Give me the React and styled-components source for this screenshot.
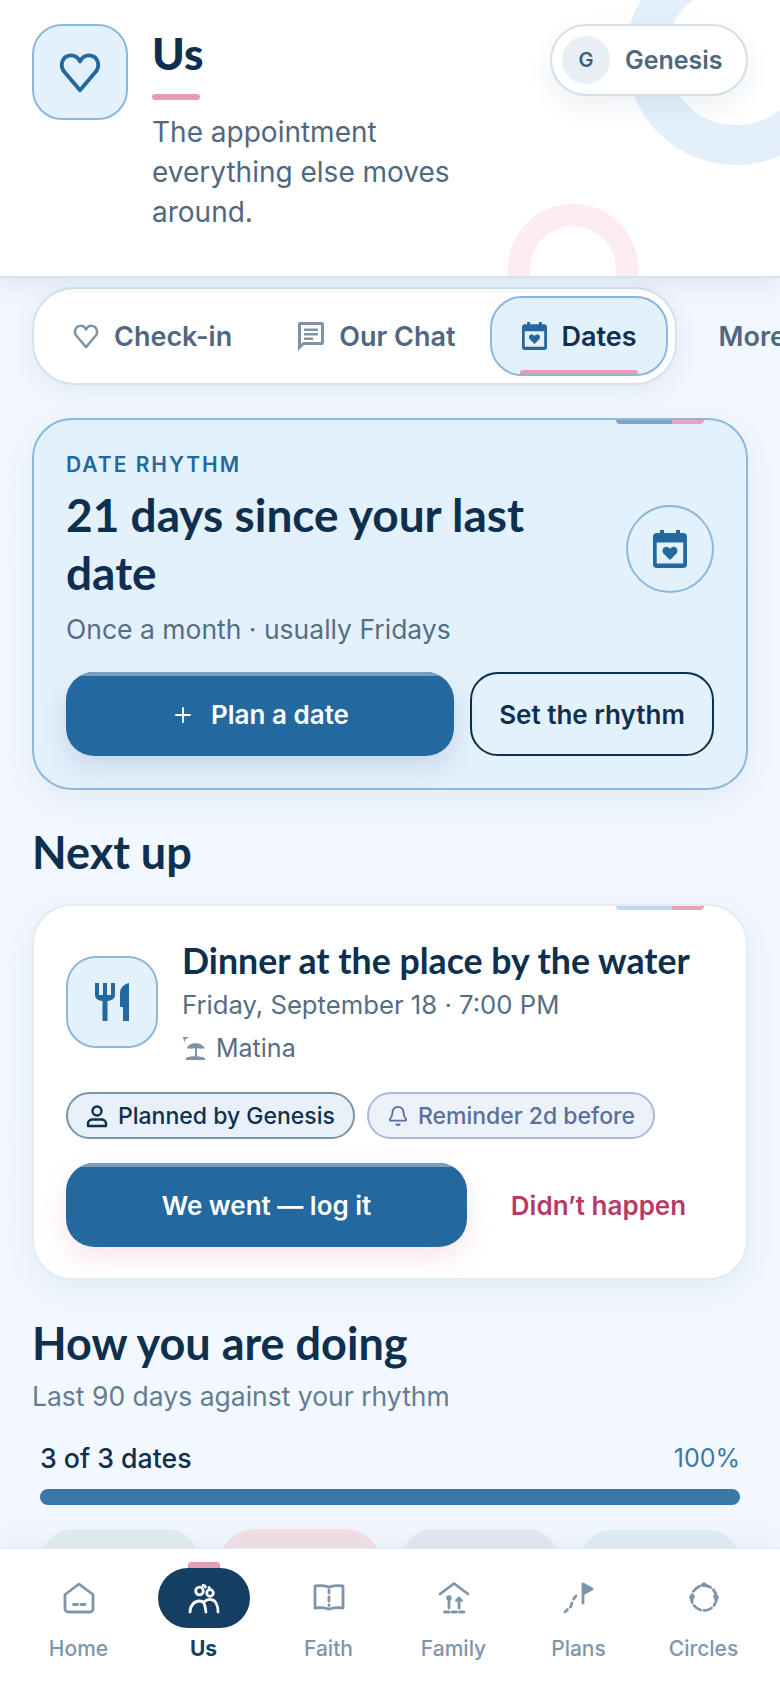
import React from 'react';
import styled, { createGlobalStyle } from 'styled-components';
import { Bell, Plus } from 'lucide-react';

const GlobalStyle = createGlobalStyle`
  html, body {
    margin: 0;
    padding: 0;
    background: #f2f8fe;
    font-family: Inter, "Liberation Sans", sans-serif;
  }
  * { box-sizing: border-box; }
`;

const headingFont = `Lato, Inter, sans-serif`;

const Screen = styled.div`
  width: 780px;
  height: 1688px;
  display: flex;
  flex-direction: column;
  overflow: hidden;
  background: linear-gradient(180deg, #f1f7fe 0%, #f3f8fe 100%);
`;

const Header = styled.header`
  position: relative;
  z-index: 2;
  flex-shrink: 0;
  height: 278px;
  padding: 24px 32px 0;
  display: flex;
  gap: 24px;
  align-items: flex-start;
  overflow: hidden;
  background: #fff;
  border-bottom: 2px solid #d8e4ed;
  box-shadow: 0 6px 22px rgba(30, 70, 110, 0.1);
`;

const Ring = styled.div`
  position: absolute;
  left: ${p => p.$left}px;
  top: ${p => p.$top}px;
  width: ${p => p.$size}px;
  height: ${p => p.$size}px;
  border-radius: 50%;
  border: ${p => p.$stroke}px solid ${p => p.$color};
`;

const IconTile = styled.div`
  position: relative;
  width: ${p => p.$size || 96}px;
  height: ${p => p.$size || 96}px;
  border-radius: 30px;
  flex-shrink: 0;
  display: flex;
  align-items: center;
  justify-content: center;
  background: #e3f1fc;
  border: 2px solid #8db8dc;
  color: #23689f;
`;

const HeaderText = styled.div`
  position: relative;
  width: 330px;
`;

const PageTitle = styled.h1`
  margin: 0;
  font-family: ${headingFont};
  font-size: 44px;
  font-weight: 900;
  line-height: 58px;
  color: #0f2f4f;
`;

const TitleUnderline = styled.div`
  width: 48px;
  height: 6px;
  margin-top: 12px;
  border-radius: 3px;
  background: #e79bb6;
`;

const Subtitle = styled.p`
  margin: 12px 0 0;
  font-size: 28px;
  line-height: 40px;
  color: #4f6880;
`;

const ProfilePill = styled.div`
  position: relative;
  margin-left: auto;
  width: 198px;
  height: 72px;
  padding-left: 10px;
  display: flex;
  align-items: center;
  gap: 15px;
  border-radius: 36px;
  background: #fff;
  border: 2px solid #d3e0ea;
  box-shadow: 0 10px 26px rgba(30, 70, 110, 0.08);
`;

const Avatar = styled.div`
  width: 48px;
  height: 48px;
  border-radius: 50%;
  display: flex;
  align-items: center;
  justify-content: center;
  font-size: 20px;
  font-weight: 600;
  color: #3f5b76;
  background: #e9eef4;
`;

const ProfileName = styled.span`
  font-size: 25px;
  font-weight: 600;
  color: #4f6880;
`;

const Body = styled.main`
  flex: 1;
  min-height: 0;
  overflow: hidden;
  padding: 9px 32px 0;
`;

const TabRow = styled.div`
  display: flex;
  align-items: center;
  gap: 42px;
  white-space: nowrap;
`;

const TabTrack = styled.div`
  flex-shrink: 0;
  display: flex;
  gap: 2px;
  height: 98px;
  padding: 7px 7px 7px 6px;
  border-radius: 42px;
  background: #fff;
  border: 2px solid #d5e2ec;
  box-shadow: 0 6px 24px rgba(30, 70, 110, 0.08);
`;

const Tab = styled.div`
  position: relative;
  height: 80px;
  margin-left: ${p => (p.$active ? 2 : 0)}px;
  padding: 0 29px 0 30px;
  display: flex;
  align-items: center;
  gap: 14px;
  border-radius: 32px;
  overflow: hidden;
  font-size: 27px;
  font-weight: 600;
  color: ${p => (p.$active ? '#0f2f4f' : '#4f6880')};
  background: ${p => (p.$active ? '#e3f1fc' : 'transparent')};
  border: 2px solid ${p => (p.$active ? '#8db8dc' : 'transparent')};
  svg { color: ${p => (p.$active ? '#23689f' : '#7d93a8')}; }
`;

const TabMarker = styled.span`
  position: absolute;
  left: 28px;
  right: 28px;
  bottom: -2px;
  height: 6px;
  border-radius: 3px 3px 0 0;
  background: #e79bb6;
`;

const MoreTab = styled.span`
  font-size: 27px;
  font-weight: 600;
  color: #4f6880;
`;

const Card = styled.section`
  position: relative;
  border-radius: 40px;
  overflow: hidden;
  border: 2px solid ${p => (p.$hero ? '#8db8dc' : '#e4ebf1')};
  background: ${p => (p.$hero ? '#e3f1fc' : '#fff')};
  box-shadow: 0 10px 30px rgba(35, 90, 140, 0.08);
`;

const HeroCard = styled(Card)`
  margin-top: 33px;
  padding: 32px 32px 32px;
`;

const NextCard = styled(Card)`
  margin-top: 23px;
  padding: 32px 32px 31px;
`;

const CornerStrip = styled.div`
  position: absolute;
  top: -2px;
  right: 42px;
  display: flex;
  height: 6px;
  border-radius: 0 0 4px 4px;
  overflow: hidden;
`;

const StripPart = styled.span`
  width: ${p => p.$width}px;
  background: ${p => p.$color};
`;

const HeroTop = styled.div`
  display: flex;
  align-items: center;
  gap: 24px;
`;

const HeroText = styled.div`
  flex: 1;
`;

const Eyebrow = styled.div`
  font-size: 21px;
  line-height: 26px;
  font-weight: 600;
  letter-spacing: 2px;
  color: #23689f;
`;

const HeroTitle = styled.h2`
  margin: 8px 0 0;
  font-family: ${headingFont};
  font-size: 46px;
  line-height: 58px;
  font-weight: 700;
  color: #0f2f4f;
`;

const HeroSub = styled.p`
  margin: 10px 0 0;
  font-size: 26.500px;
  line-height: 34px;
  color: #566e84;
`;

const CircleIcon = styled.div`
  flex-shrink: 0;
  width: 88px;
  height: 88px;
  border-radius: 50%;
  display: flex;
  align-items: center;
  justify-content: center;
  border: 2px solid #8db8dc;
  color: #23689f;
`;

const ButtonRow = styled.div`
  display: flex;
  align-items: center;
  gap: 16px;
  margin-top: ${p => p.$top}px;
`;

const PrimaryButton = styled.button`
  position: relative;
  flex: 0 0 ${p => p.$width}px;
  height: 84px;
  padding: 1px 0 0;
  display: flex;
  align-items: center;
  justify-content: center;
  gap: 16px;
  overflow: hidden;
  border: 0;
  border-radius: 28px;
  font: 600 26px Inter, sans-serif;
  color: #fff;
  background: #23689f;
  box-shadow: 0 12px 24px ${p => p.$glow};
  &::before {
    content: '';
    position: absolute;
    top: 0;
    left: 0;
    right: 0;
    height: 4px;
    background: #7a9dbd;
  }
`;

const OutlineButton = styled.button`
  flex: 1;
  height: 84px;
  border-radius: 28px;
  border: 2px solid #0f2f4f;
  background: transparent;
  font: 600 26px Inter, sans-serif;
  color: #0f2f4f;
`;

const TextButton = styled.button`
  flex: 1;
  height: 84px;
  border: 0;
  background: none;
  font: 600 26px Inter, sans-serif;
  color: #b73a68;
`;

const SectionTitle = styled.h2`
  margin: ${p => p.$top}px 0 0;
  font-family: ${headingFont};
  font-size: 45px;
  line-height: 54px;
  padding-bottom: 2px;
  font-weight: 700;
  color: #0f2f4f;
`;

const EventRow = styled.div`
  display: flex;
  align-items: center;
  gap: 24px;
`;

const EventTitle = styled.div`
  font-family: ${headingFont};
  font-size: 35.700px;
  line-height: 46px;
  padding-bottom: 3px;
  font-weight: 700;
  white-space: nowrap;
  color: #0f2f4f;
`;

const EventDate = styled.div`
  font-size: 25.700px;
  line-height: 36px;
  color: #566e84;
`;

const EventPlace = styled.div`
  margin-top: 7px;
  display: flex;
  align-items: center;
  gap: 10px;
  font-size: 25px;
  line-height: 36px;
  color: #566e84;
  svg { color: #7d93a8; }
`;

const ChipRow = styled.div`
  display: flex;
  gap: 12px;
  margin-top: 26px;
`;

const Chip = styled.div`
  height: 47px;
  padding: 0 18px;
  display: flex;
  align-items: center;
  gap: ${p => (p.$muted ? 9 : 10)}px;
  border-radius: 24px;
  font-size: 23px;
  font-weight: 500;
  white-space: nowrap;
  color: ${p => (p.$muted ? '#5a6f9a' : '#0f2f4f')};
  background: ${p => (p.$muted ? '#edf1fa' : '#e8f1f9')};
  border: 2px solid ${p => (p.$muted ? '#aeb9d6' : '#7d93a8')};
`;

const SectionSub = styled.p`
  margin: 6px 0 0;
  font-size: 26.500px;
  line-height: 36px;
  color: #647c92;
`;

const RateRow = styled.div`
  margin: 26px 8px 0;
  display: flex;
  justify-content: space-between;
  line-height: 36px;
  font-size: 26.700px;
  font-weight: 500;
  color: #0f2f4f;
`;

const RatePercent = styled.span`
  font-weight: 400;
  font-size: 25px;
  color: #3a78a5;
`;

const RateBar = styled.div`
  margin: 13px 8px 0;
  height: 16px;
  border-radius: 8px;
  background: #3a78a5;
`;

const StatGrid = styled.div`
  margin: 24px 8px 0;
  display: grid;
  grid-template-columns: repeat(4, 1fr);
  gap: 20px;
`;

const StatTile = styled.div`
  height: 100px;
  border-radius: 34px;
  background: ${p => p.$color};
`;

const BottomNav = styled.nav`
  position: relative;
  z-index: 2;
  flex-shrink: 0;
  height: 139px;
  padding: 0 16px;
  display: grid;
  grid-template-columns: repeat(6, 125px);
  background: #fff;
  box-shadow: 0 -1px 0 #e3eaf0, 0 -10px 30px rgba(30, 70, 110, 0.06);
`;

const NavItem = styled.div`
  position: relative;
  display: flex;
  flex-direction: column;
  align-items: center;
  padding-top: 19px;
  font-size: 21px;
  line-height: 26px;
  font-weight: ${p => (p.$active ? 700 : 500)};
  color: ${p => (p.$active ? '#143f63' : '#7e95ab')};
`;

const NavIcon = styled.div`
  width: 92px;
  height: 60px;
  margin-bottom: 8px;
  display: flex;
  align-items: center;
  justify-content: center;
  border-radius: 30px;
  color: ${p => (p.$active ? '#fff' : '#7e95ab')};
  background: ${p => (p.$active ? '#143f63' : 'transparent')};
`;

const NavMarker = styled.span`
  position: absolute;
  top: 13px;
  left: 50%;
  width: 32px;
  height: 6px;
  margin-left: -16px;
  border-radius: 3px 3px 0 0;
  background: #e79bb6;
`;

const Heart = ({ size, width = 2.4 }) => (
  <svg width={size} height={size} viewBox="0 0 24 24" fill="none" stroke="currentColor" strokeWidth={width} strokeLinejoin="round">
    <path d="M12 21.500 3.600 11.600C1.400 8.800 2.600 3.600 7 3.300c2.300-.1 4 1.200 5 3.200 1-2 2.700-3.300 5-3.200 4.400.3 5.600 5.500 3.400 8.300z" />
  </svg>
);

const ChatIcon = () => (
  <svg width="28" height="30" viewBox="0 0 28 30" fill="currentColor">
    <path fillRule="evenodd" d="M3 1h22a2 2 0 0 1 2 2v19a2 2 0 0 1-2 2H7l-6 6V3a2 2 0 0 1 2-2zm1 3v19l2-2h18V4z" />
    <path d="M7 7.500h14v2.500H7zM7 12h14v2.500H7zM7 16.500h9V19H7z" />
  </svg>
);

const CalendarHeart = ({ width, height }) => (
  <svg width={width} height={height} viewBox="0 0 34 38" fill="currentColor">
    <path fillRule="evenodd" d="M7 0h4v3h12V0h4v3h3a4 4 0 0 1 4 4v27a4 4 0 0 1-4 4H4a4 4 0 0 1-4-4V7a4 4 0 0 1 4-4h3zM3.700 12.500v21h26.500v-21z" />
    <path d="M17 30 10.500 23.500c-2.500-3 0-7 3.200-6.700 1.500.1 2.600 1 3.300 2.200.7-1.200 1.800-2.100 3.300-2.200 3.200-.3 5.700 3.700 3.200 6.700z" />
  </svg>
);

const Cutlery = () => (
  <svg width="34" height="38" viewBox="0 0 34 38" fill="currentColor">
    <path d="M0 0h4v12h4V0h4v12h4V0h4v12c0 3-2.500 5.500-7.500 6V38h-5V18C2.500 17.500 0 15 0 12z" />
    <path d="M34 0v38h-6V24h-3V10C25 5 29 1 34 0z" />
  </svg>
);

const BeachIcon = () => (
  <svg width="24" height="24" viewBox="0 0 24 24" fill="currentColor">
    <path d="M1 1h6L3 3.500 2.500 7z" />
    <path d="M5 13c.5-7 15-8 18 0-2-1-3-1-4.500 0-1.500-1-3-1-4.500 0-1.500-1-3-1-4.500 0-1.500-1-3-1-4.500 0z" />
    <path d="M13 12h2v8h-2z" />
    <path d="M4 24v-2c3-2.500 14-2.500 19 0v2z" />
  </svg>
);

const PersonIcon = () => (
  <svg width="22" height="24" viewBox="0 0 22 24" fill="none" stroke="currentColor" strokeWidth="2.400" strokeLinejoin="round">
    <circle cx="11" cy="7" r="4.500" />
    <path d="M2 22v-2.500c0-2.500 2-4 4.500-4h9c2.500 0 4.500 1.500 4.500 4V22z" />
  </svg>
);

const NavSvg = ({ children }) => (
  <svg width="36" height="36" viewBox="0 0 36 36" fill="none" stroke="currentColor" strokeWidth="2.800" strokeLinecap="round" strokeLinejoin="round">
    {children}
  </svg>
);

const HomeIcon = () => (
  <NavSvg>
    <path d="M18 4 32 14.500V29a3 3 0 0 1-3 3H7a3 3 0 0 1-3-3V14.500z" />
    <path d="M12.500 24.500H16.500M20 24.500H24" />
  </NavSvg>
);

const CoupleIcon = () => (
  <NavSvg>
    <circle cx="13.500" cy="11" r="3.800" />
    <circle cx="24" cy="13" r="3.300" />
    <path d="M17 5.500c1 0 2 .5 2.500 1.500M23 7.500l.5 1.500" />
    <path d="M4 32c0-6 4-11 9.500-11S19 26 20 32M18 22c2-2 4-3 7-2.500 4 .5 7 5 7 12.500" />
  </NavSvg>
);

const BookIcon = () => (
  <NavSvg>
    <path d="M4 6c4-.5 9-.5 12 .5 1 .5 3 .5 4 0C23 5.500 28 5.500 32 6v22c-4-.5-8-.5-12 .5-1 .5-3 .5-4 0-4-1-8-1-12-.5z" />
    <path d="M18 10v3M18 17v4M18 25v.5" />
  </NavSvg>
);

const FamilyIcon = () => (
  <NavSvg>
    <path d="M4 14 18 3.500 32 14" />
    <path d="M13 19v9M23 19v9" />
    <circle cx="13" cy="18" r="1.400" />
    <path d="M20.500 20.500 23 18l2.500 2.500" />
    <path d="M8.500 32H13M16 32h4.500M23.500 32H28" />
  </NavSvg>
);

const TrailIcon = () => (
  <NavSvg>
    <path d="M22 23V4l9 5-9 5" fill="currentColor" />
    <path d="M4 32l2.500-2.500M9.500 27l1.500-4M12.500 19l2.500-3" />
  </NavSvg>
);

const CirclesIcon = () => (
  <NavSvg>
    <circle cx="18" cy="18" r="12.500" strokeDasharray="8 3.500" />
    <path d="M16 5 18 3.500 20 5z" fill="currentColor" />
    <path d="M6 20l-1.500-3 3-1zM30 20l1.500-3-3-1z" fill="currentColor" />
  </NavSvg>
);

const tabs = [
  { label: 'Check-in', icon: <Heart size={28} width={2.1} /> },
  { label: 'Our Chat', icon: <ChatIcon /> },
  { label: 'Dates', icon: <CalendarHeart width={25} height={28} />, active: true },
];

const navItems = [
  { label: 'Home', icon: <HomeIcon /> },
  { label: 'Us', icon: <CoupleIcon />, active: true },
  { label: 'Faith', icon: <BookIcon /> },
  { label: 'Family', icon: <FamilyIcon /> },
  { label: 'Plans', icon: <TrailIcon /> },
  { label: 'Circles', icon: <CirclesIcon /> },
];

const statColors = ['#e3eef2', '#f5e2ea', '#e6ebf3', '#e3eff5'];

export default function App() {
  return (
    <Screen>
      <GlobalStyle />
      <Header>
        <Ring $left={626} $top={-55} $size={220} $stroke={40} $color="#e3f0fb" />
        <Ring $left={508} $top={204} $size={130} $stroke={22} $color="#fcebf0" />
        <IconTile>
          <Heart size={46} width={2} />
        </IconTile>
        <HeaderText>
          <PageTitle>Us</PageTitle>
          <TitleUnderline />
          <Subtitle>The appointment everything else moves around.</Subtitle>
        </HeaderText>
        <ProfilePill>
          <Avatar>G</Avatar>
          <ProfileName>Genesis</ProfileName>
        </ProfilePill>
      </Header>

      <Body>
        <TabRow>
          <TabTrack>
            {tabs.map(tab => (
              <Tab key={tab.label} $active={tab.active}>
                {tab.icon}
                {tab.label}
                {tab.active && <TabMarker />}
              </Tab>
            ))}
          </TabTrack>
          <MoreTab>More</MoreTab>
        </TabRow>

        <HeroCard $hero>
          <CornerStrip>
            <StripPart $width={56} $color="#7ea5c8" />
            <StripPart $width={32} $color="#e6a3bc" />
          </CornerStrip>
          <HeroTop>
            <HeroText>
              <Eyebrow>DATE RHYTHM</Eyebrow>
              <HeroTitle>21 days since your last date</HeroTitle>
              <HeroSub>Once a month · usually Fridays</HeroSub>
            </HeroText>
            <CircleIcon>
              <CalendarHeart width={34} height={38} />
            </CircleIcon>
          </HeroTop>
          <ButtonRow $top={26}>
            <PrimaryButton $width={388} $glow="rgba(60, 70, 130, 0.14)">
              <Plus size={24} strokeWidth={2} />
              Plan a date
            </PrimaryButton>
            <OutlineButton>Set the rhythm</OutlineButton>
          </ButtonRow>
        </HeroCard>

        <SectionTitle $top={35}>Next up</SectionTitle>

        <NextCard>
          <CornerStrip>
            <StripPart $width={56} $color="#bfd9ee" />
            <StripPart $width={32} $color="#e6a3bc" />
          </CornerStrip>
          <EventRow>
            <IconTile $size={92}>
              <Cutlery />
            </IconTile>
            <div>
              <EventTitle>Dinner at the place by the water</EventTitle>
              <EventDate>Friday, September 18 · 7:00 PM</EventDate>
              <EventPlace>
                <BeachIcon />
                Matina
              </EventPlace>
            </div>
          </EventRow>
          <ChipRow>
            <Chip>
              <PersonIcon />
              Planned by Genesis
            </Chip>
            <Chip $muted>
              <Bell size={22} strokeWidth={2} />
              Reminder 2d before
            </Chip>
          </ChipRow>
          <ButtonRow $top={24}>
            <PrimaryButton $width={401} $glow="rgba(231, 155, 182, 0.25)">We went — log it</PrimaryButton>
            <TextButton>Didn’t happen</TextButton>
          </ButtonRow>
        </NextCard>

        <SectionTitle $top={36}>How you are doing</SectionTitle>
        <SectionSub>Last 90 days against your rhythm</SectionSub>
        <RateRow>
          <span>3 of 3 dates</span>
          <RatePercent>100%</RatePercent>
        </RateRow>
        <RateBar />
        <StatGrid>
          {statColors.map(color => (
            <StatTile key={color} $color={color} />
          ))}
        </StatGrid>
      </Body>

      <BottomNav>
        {navItems.map(item => (
          <NavItem key={item.label} $active={item.active}>
            {item.active && <NavMarker />}
            <NavIcon $active={item.active}>{item.icon}</NavIcon>
            {item.label}
          </NavItem>
        ))}
      </BottomNav>
    </Screen>
  );
}
